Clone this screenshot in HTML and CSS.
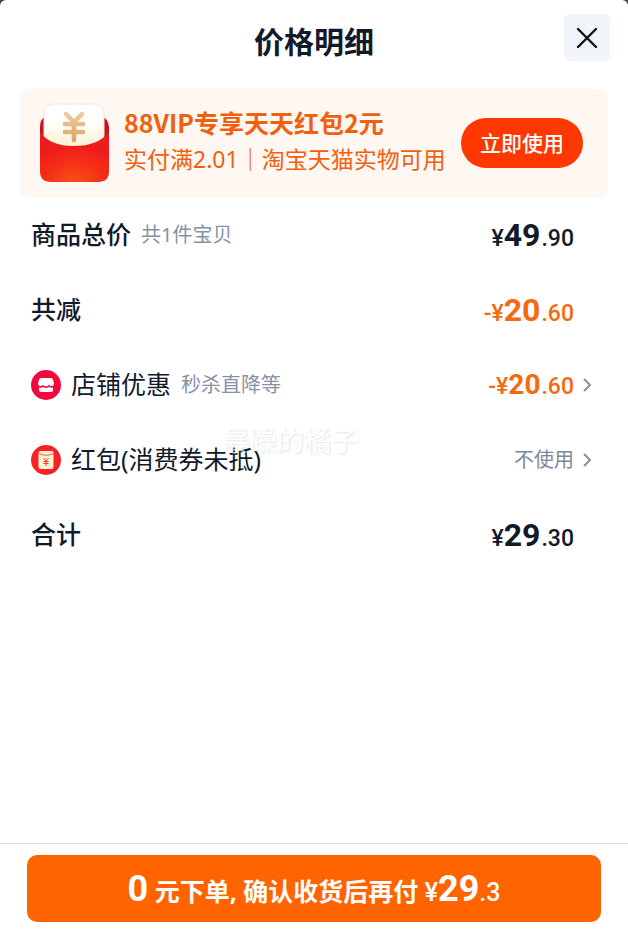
FILE: index.html
```html
<!DOCTYPE html>
<html lang="zh-CN">
<head>
  <meta charset="UTF-8">
  <meta name="viewport" content="width=device-width, initial-scale=1">
  <title>价格明细</title>
  <link rel="stylesheet" href="styles.css">
</head>
<body>

<div class="sheet">
  <header class="header">
    <h1 class="title">价格明细</h1>
    <button class="close" type="button" aria-label="关闭">
      <svg width="24" height="24" viewBox="0 0 24 24" fill="none" stroke="#111" stroke-width="2.4" stroke-linecap="round">
        <path d="M3 3L21 21M21 3L3 21"/>
      </svg>
    </button>
  </header>

  <main class="content">
    <section class="coupon">
      <svg class="coupon-icon" width="70" height="80" viewBox="0 0 70 80" aria-hidden="true">
        <defs>
          <radialGradient id="pocket" cx="0.5" cy="1" r="0.75">
            <stop offset="0" stop-color="#f9501a"/>
            <stop offset="0.6" stop-color="#f52c16"/>
            <stop offset="1" stop-color="#ee1c1c"/>
          </radialGradient>
          <linearGradient id="paper" x1="0" y1="0" x2="0" y2="1">
            <stop offset="0.3" stop-color="#ffffff"/>
            <stop offset="0.8" stop-color="#fdf0d2"/>
          </linearGradient>
          <linearGradient id="yen" x1="0" y1="0" x2="0" y2="1">
            <stop offset="0" stop-color="#efc79a"/>
            <stop offset="1" stop-color="#dba76f"/>
          </linearGradient>
        </defs>
        <path d="M1 24Q1 15 8 13H62Q69 15 70 24V50H1Z" fill="#c9141c"/>
        <rect x="5" y="1" width="60" height="54" rx="9" fill="url(#paper)" stroke="#f7e5d4"/>
        <path d="M27 11L35 19L43 11M26 21H44M26 29H44M35 20V37" fill="none" stroke="url(#yen)" stroke-width="4.5" stroke-linecap="round" stroke-linejoin="round"/>
        <path d="M1 29Q11 43 35 43T70 29V68Q70 79 59 79H12Q1 79 1 68Z" fill="url(#pocket)"/>
      </svg>
      <div class="coupon-text">
        <h2 class="coupon-title">88VIP专享天天红包2元</h2>
        <p class="coupon-desc">实付满2.01｜淘宝天猫实物可用</p>
      </div>
      <button class="use-btn" type="button">立即使用</button>
    </section>

    <ul class="rows">
      <li class="row">
        <span class="label">商品总价</span>
        <span class="note">共1件宝贝</span>
        <span class="price">¥<b>49</b>.90</span>
      </li>
      <li class="row">
        <span class="label">共减</span>
        <span class="price discount">-¥<b>20</b>.60</span>
      </li>
      <li>
        <a class="row link" href="#shop">
          <svg class="row-icon" width="30" height="30" viewBox="0 0 30 30" aria-hidden="true">
            <circle cx="15" cy="15" r="15" fill="#f5083c"/>
            <path d="M10 8H20Q21.500 8 22 9.500L23 13.500Q23 16 20.800 16Q19 16 18 15Q16.500 16.400 15 16.400T12 15Q11 16 9.200 16Q7 16 7 13.500L8 9.500Q8.500 8 10 8Z" fill="#fff"/>
            <path d="M8 17.500Q10.500 18 12 17Q15 19 18 17Q19.500 18 22 17.500V20Q22 22 20 22H10Q8 22 8 20Z" fill="#fff"/>
          </svg>
          <span class="label">店铺优惠</span>
          <span class="note">秒杀直降等</span>
          <span class="price discount small">-¥<b>20</b>.60</span>
          <svg class="arrow" width="10" height="16" viewBox="0 0 10 16" aria-hidden="true">
            <path d="M2 2L8 8L2 14"/>
          </svg>
        </a>
      </li>
      <li>
        <a class="row link" href="#redpacket">
          <svg class="row-icon" width="30" height="30" viewBox="0 0 30 30" aria-hidden="true">
            <circle cx="15" cy="15" r="15" fill="#f52323"/>
            <rect x="7.500" y="6" width="15" height="18" rx="2" fill="#fff0d2"/>
            <path d="M7.500 8.500Q15 12 22.500 8.500" fill="none" stroke="#f0603c"/>
            <path d="M12.500 13L15 16L17.500 13M12.500 16.500H17.500M12.500 18.500H17.500M15 16V21" fill="none" stroke="#e8432c"/>
          </svg>
          <span class="label">红包(消费券未抵)</span>
          <span class="state">不使用</span>
          <svg class="arrow" width="10" height="16" viewBox="0 0 10 16" aria-hidden="true">
            <path d="M2 2L8 8L2 14"/>
          </svg>
        </a>
      </li>
      <li class="row">
        <span class="label">合计</span>
        <span class="price">¥<b>29</b>.30</span>
      </li>
    </ul>
    <span class="watermark">暴躁的橘子</span>
  </main>

  <footer class="footer">
    <button class="submit" type="button"><span class="amount"><b>0</b></span> 元下单, 确认收货后再付 <span class="amount">¥<b>29</b>.3</span></button>
  </footer>
</div>

</body>
</html>
```

FILE: styles.css
```css
* {
  margin: 0;
  padding: 0;
  box-sizing: border-box;
}

body {
  background: #444;
  color: #111a2c;
  font-family: "Noto Sans", "Noto Sans CJK SC", sans-serif;
}

button {
  border: none;
  font-family: inherit;
  cursor: pointer;
}

.sheet {
  display: flex;
  flex-direction: column;
  min-height: 100vh;
  background: #fff;
  border-radius: 6px 6px 0 0;
}

/* header */
.header {
  display: grid;
  grid-template-columns: 46px 1fr 46px;
  padding: 14px 18px 0;
  height: 89px;
}

.title {
  grid-column: 2;
  font-size: 30px;
  font-weight: 700;
  line-height: 56px;
  text-align: center;
}

.close {
  display: flex;
  align-items: center;
  justify-content: center;
  height: 47px;
  background: #f1f5f9;
  border-radius: 6px;
}

.content {
  position: relative;
  flex: 1;
}

/* red packet banner */
.coupon {
  display: flex;
  align-items: center;
  margin: 0 20px;
  padding: 14px 25px 14px 19px;
  background: #fff8f2;
  border-radius: 8px;
}

.coupon-icon {
  flex: none;
  margin-right: 15px;
}

.coupon-text {
  flex: 1;
  color: #f0600f;
  white-space: nowrap;
}

.coupon-title {
  font-family: "Noto Sans CJK SC", sans-serif;
  font-size: 25px;
  font-weight: 700;
  line-height: 36px;
}

.coupon-desc {
  padding-bottom: 4px;
  font-size: 23px;
  line-height: 38px;
}

.use-btn {
  flex: none;
  width: 122px;
  height: 50px;
  padding-bottom: 2px;
  background: #ff3700;
  border-radius: 25px;
  color: #fff;
  font-size: 21px;
  font-weight: 500;
}

/* price rows */
.rows {
  list-style: none;
}

.row {
  display: flex;
  align-items: center;
  height: 75px;
  padding: 0 54px 0 31px;
}

.link {
  padding-right: 36px;
  color: inherit;
  text-decoration: none;
}

.row-icon {
  margin-right: 10px;
}

.label {
  padding-bottom: 2px;
  font-size: 25px;
  font-weight: 500;
  line-height: 36px;
}

.link .label {
  font-weight: 400;
}

.note {
  margin-left: 10px;
  color: #8592a6;
  font-size: 20px;
  line-height: 30px;
}

.price {
  margin-left: auto;
  font-family: Roboto, sans-serif;
  font-size: 23px;
  font-weight: 500;
}

.price b {
  margin-right: 1px;
  font-size: 32px;
  font-weight: 700;
}

.price.small b {
  font-size: 28px;
}

.discount {
  color: #f56a10;
}

.state {
  margin-left: auto;
  color: #7c899d;
  font-size: 20px;
  line-height: 30px;
}

.arrow {
  margin-left: 8px;
  fill: none;
  stroke: #8a8f99;
  stroke-width: 2;
}

.watermark {
  position: absolute;
  top: 338px;
  left: 223px;
  color: #fff;
  font-size: 27px;
  line-height: 27px;
  text-shadow: 1px 1px 2px rgba(0, 0, 0, 0.16);
  opacity: 0.7;
  pointer-events: none;
}

/* bottom bar */
.footer {
  padding: 11px 27px 25px;
  border-top: 1px solid #dedede;
}

.submit {
  width: 100%;
  height: 67px;
  background: #ff6400;
  border-radius: 10px;
  color: #fff;
  font-size: 25px;
  font-weight: 700;
  white-space: nowrap;
}

.amount {
  font-family: Roboto, sans-serif;
  font-weight: 500;
}

.amount b {
  font-size: 36px;
  font-weight: 700;
}
```
